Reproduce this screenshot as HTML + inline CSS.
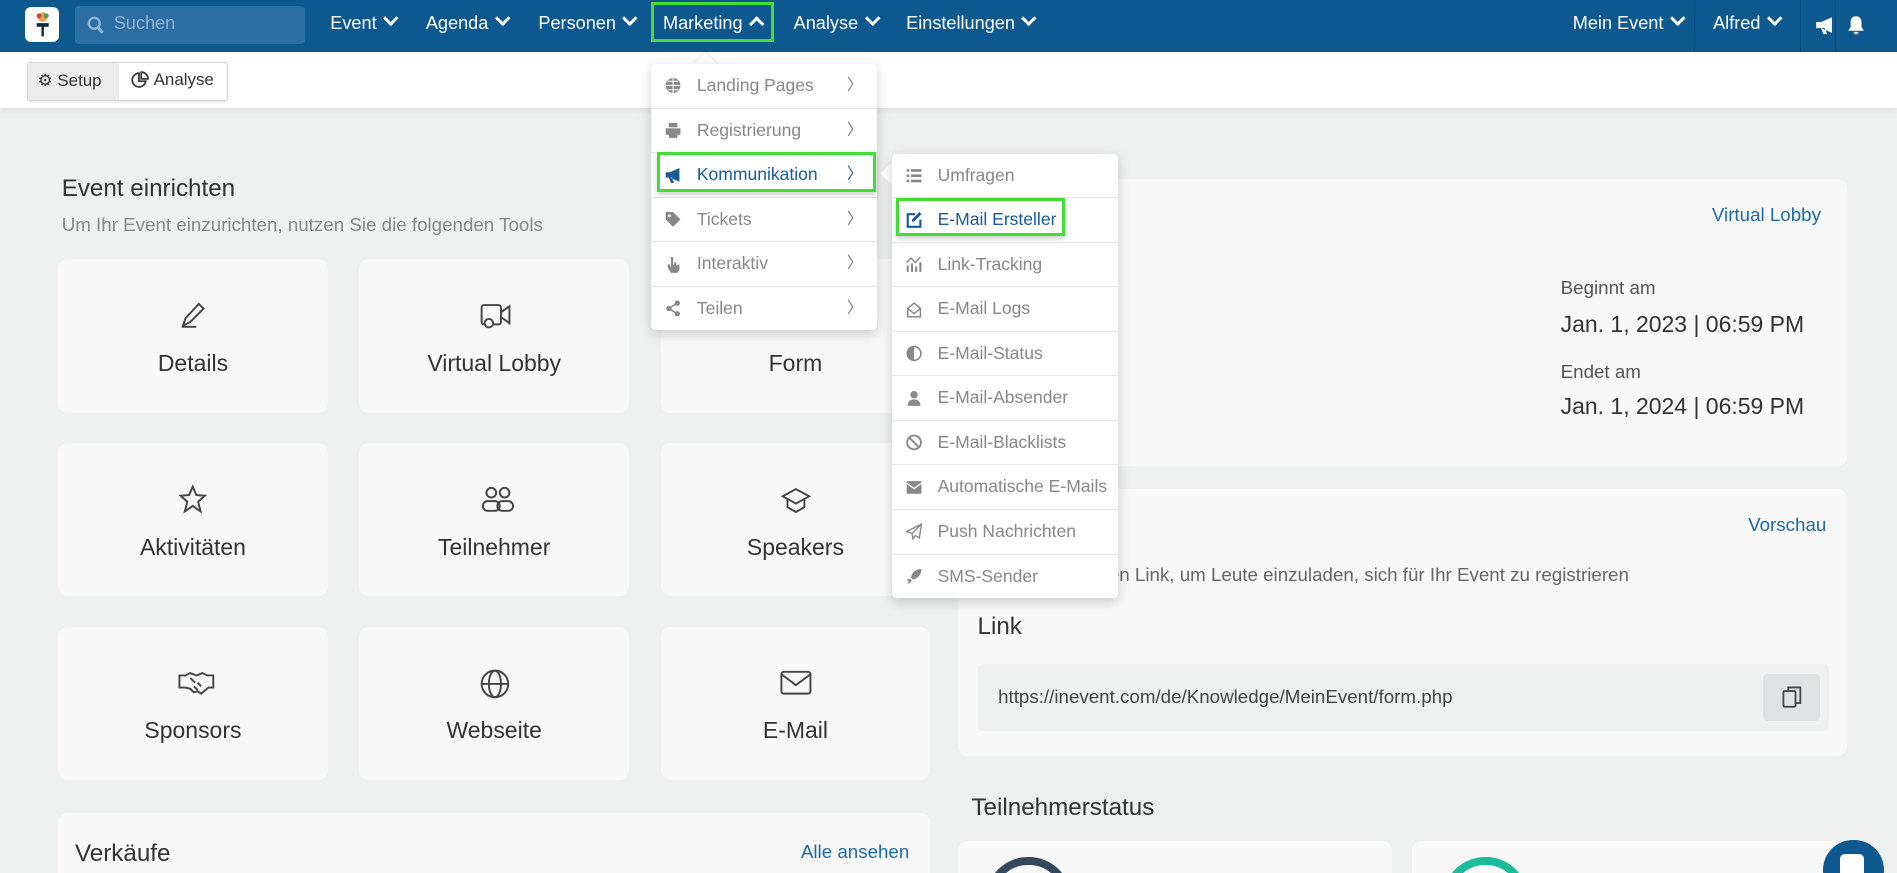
<!DOCTYPE html>
<html><head><meta charset="utf-8">
<style>
html,body{margin:0;padding:0;overflow:hidden;height:100%}
html{zoom:1.2098}
#w{width:1568px;height:722px;overflow:hidden;background:#eff0f0;font-family:"Liberation Sans",sans-serif;position:relative;color:#333}
.abs{position:absolute}
.nav{left:0;top:0;width:1568px;height:43px;background:#0e5890}
.nav .it{position:absolute;top:11px;color:#fff;font-size:15px;white-space:nowrap}
.chev{display:inline-block;width:7px;height:7px;border-right:2.5px solid #fff;border-bottom:2.5px solid #fff;transform:rotate(45deg);margin-left:7px;position:relative;top:-4px}
.chevu{transform:rotate(-135deg);top:0}
.div{position:absolute;top:0;width:1px;height:43px;background:#0a4a7a}
.sub{left:0;top:43px;width:1568px;height:46px;background:#fff;box-shadow:0 2px 4px rgba(0,0,0,.08)}
.card{position:absolute;background:#f8f8f8;border-radius:8px}
.tile{width:223px;height:127px;text-align:center}
.tile svg{position:absolute;left:98px;top:33px}
.tile .lb{position:absolute;left:0;right:0;top:75px;font-size:19px;color:#333}
.menu{position:absolute;background:#fff;border-radius:4px;box-shadow:0 3px 10px rgba(0,0,0,.18)}
.mi{position:relative;height:36px;border-bottom:1px solid #e6e6e6;font-size:14.5px;color:#888;line-height:36px}
.mi:last-child{border-bottom:none}
.mi .ic{position:absolute;left:11px;top:11px;width:15px;height:14px}
.mi .tx{position:absolute;left:38px}
.mi .ar{position:absolute;right:12px;top:0;font-size:13px;color:#777}
.green{position:absolute;border:3px solid #44dd33;box-shadow:0 2px 4px rgba(0,0,0,.2)}
a{color:#1e6aa6;text-decoration:none}
</style></head><body><div id="w">
<div class="abs nav">
  <div class="abs" style="left:21px;top:6px;width:28px;height:29px;background:#fff;border-radius:5px"></div>
  <svg class="abs" style="left:27px;top:9px" width="16" height="22" viewBox="0 0 16 22"><circle cx="8" cy="5" r="4" fill="#e8a050"/><circle cx="5" cy="4" r="2" fill="#d04040"/><circle cx="11" cy="4" r="2" fill="#40a060"/><path d="M3 10h10v3H9v8H7v-8H3z" fill="#0b2a40"/></svg>
  <div class="abs" style="left:62px;top:5px;width:190px;height:31px;background:#2b6ea3;border-radius:3px"></div>
  <svg class="abs" style="left:72px;top:13px" width="14" height="15" viewBox="0 0 14 15"><circle cx="6" cy="6" r="4.5" stroke="#8fb3d3" stroke-width="2" fill="none"/><path d="M9 9.5l4 4.5" stroke="#8fb3d3" stroke-width="2.5"/></svg>
  <div class="it" style="left:94px;color:#8fb3d3">Suchen</div>
  <div class="it" style="left:273px">Event<span class="chev"></span></div>
  <div class="it" style="left:352px">Agenda<span class="chev"></span></div>
  <div class="it" style="left:445px">Personen<span class="chev"></span></div>
  <div class="it" style="left:548px">Marketing<span class="chev chevu"></span></div>
  <div class="it" style="left:656px">Analyse<span class="chev"></span></div>
  <div class="it" style="left:749px">Einstellungen<span class="chev"></span></div>
  <div class="it" style="left:1300px">Mein Event<span class="chev"></span></div>
  <div class="div" style="left:1400px"></div>
  <div class="it" style="left:1416px">Alfred<span class="chev"></span></div>
  <div class="div" style="left:1488px"></div>
  <svg class="abs" style="left:1500px;top:13px" width="18" height="16" viewBox="0 0 18 16"><path d="M1 5h4l9-4v13l-9-4H1zM5 10l2 5h3l-2-5z" fill="#fff"/></svg>
  <div class="div" style="left:1517px"></div>
  <svg class="abs" style="left:1527px;top:12px" width="15" height="17" viewBox="0 0 15 17"><path d="M7.5 1c3 0 4.5 2 4.5 5v4l2 3H1l2-3V6c0-3 1.5-5 4.5-5zM5.5 14h4a2 2 0 0 1-4 0z" fill="#fff"/></svg>
</div>
<div class="green" style="left:538px;top:2px;width:97px;height:28px;box-shadow:none"></div>
<div class="abs sub"></div>
<div class="abs" style="left:22px;top:51px;width:165px;height:31px;border:1px solid #d5d5d5;border-radius:3px;background:#fff;box-shadow:0 1px 2px rgba(0,0,0,.1)"></div>
<div class="abs" style="left:23px;top:52px;width:75px;height:31px;background:#ececec"></div>
<div class="abs" style="left:31px;top:58px;font-size:14px;color:#333">⚙ Setup</div>
<svg class="abs" style="left:108px;top:59px" width="15" height="15" viewBox="0 0 16 16" fill="none" stroke="#333" stroke-width="1.5"><path d="M7 2a6 6 0 1 0 6 7H7z"/><path d="M9 1v6h6a6 6 0 0 0-6-6z"/></svg>
<div class="abs" style="left:127px;top:58px;font-size:14px;color:#333">Analyse</div>

<div class="abs" style="left:51px;top:145px;font-size:20px;color:#333">Event einrichten</div>
<div class="abs" style="left:51px;top:177px;font-size:15.5px;color:#888">Um Ihr Event einzurichten, nutzen Sie die folgenden Tools</div>

<div class="card tile" style="left:48px;top:214px"><svg width="26" height="26" viewBox="0 0 26 26" fill="none" stroke="#444" stroke-width="1.6"><path d="M5 22l2-6L18 4l4 4-11 11zM4 23h12"/></svg><div class="lb">Details</div></div>
<div class="card tile" style="left:297px;top:214px"><svg width="30" height="28" viewBox="0 0 30 28" fill="none" stroke="#444" stroke-width="1.6"><rect x="3" y="5" width="16" height="16" rx="2"/><path d="M19 11l7-5v14l-7-5"/><circle cx="9" cy="20" r="3.5" fill="#f8f8f8"/></svg><div class="lb">Virtual Lobby</div></div>
<div class="card tile" style="left:546px;top:214px"><div class="lb">Form</div></div>
<div class="card tile" style="left:48px;top:366px"><svg width="26" height="28" viewBox="0 0 26 28" fill="none" stroke="#444" stroke-width="1.6"><path d="M13 3l3 7 7 .5-5.5 5 2 8L13 19l-6.5 4.5 2-8L3 10.5l7-.5z"/></svg><div class="lb">Aktivitäten</div></div>
<div class="card tile" style="left:297px;top:366px"><svg width="34" height="28" viewBox="0 0 34 28" fill="none" stroke="#444" stroke-width="1.6"><circle cx="11" cy="8" r="4"/><circle cx="22" cy="8" r="4"/><rect x="4" y="15" width="14" height="8" rx="4"/><rect x="16" y="15" width="13" height="8" rx="4"/></svg><div class="lb">Teilnehmer</div></div>
<div class="card tile" style="left:546px;top:366px"><svg width="28" height="28" viewBox="0 0 28 28" fill="none" stroke="#444" stroke-width="1.6"><path d="M14 5l11 6-11 6-11-6zM7 13v7l7 4 7-4v-7"/></svg><div class="lb">Speakers</div></div>
<div class="card tile" style="left:48px;top:518px"><svg width="32" height="26" viewBox="0 0 32 26" fill="none" stroke="#444" stroke-width="1.6"><path d="M2 7h5l4-2 5 2 5-2 4 2h5v10h-4l-6 5-3-2-3 1-3-3-4-1H2zM11 9l4 4M14 16l3 3M17 13l3 3"/></svg><div class="lb">Sponsors</div></div>
<div class="card tile" style="left:297px;top:518px"><svg width="28" height="28" viewBox="0 0 28 28" fill="none" stroke="#444" stroke-width="1.6"><circle cx="14" cy="14" r="11"/><ellipse cx="14" cy="14" rx="5" ry="11"/><path d="M3 14h22"/></svg><div class="lb">Webseite</div></div>
<div class="card tile" style="left:546px;top:518px"><svg width="28" height="26" viewBox="0 0 28 26" fill="none" stroke="#444" stroke-width="1.6"><rect x="2" y="4" width="24" height="18" rx="2"/><path d="M2 6l12 9 12-9"/></svg><div class="lb">E-Mail</div></div>

<div class="card" style="left:48px;top:672px;width:721px;height:60px"></div>
<div class="abs" style="left:62px;top:694px;font-size:20px;color:#333">Verkäufe</div>
<div class="abs" style="left:662px;top:695px;font-size:15.5px"><a>Alle ansehen</a></div>

<div class="card" style="left:792px;top:148px;width:735px;height:237px"></div>
<div class="abs" style="left:1415px;top:169px;font-size:15.5px"><a>Virtual Lobby</a></div>
<div class="abs" style="left:1290px;top:229px;font-size:15.5px;color:#555">Beginnt am</div>
<div class="abs" style="left:1290px;top:257px;font-size:19px;color:#333">Jan. 1, 2023 | 06:59 PM</div>
<div class="abs" style="left:1290px;top:298px;font-size:15.5px;color:#555">Endet am</div>
<div class="abs" style="left:1290px;top:325px;font-size:19px;color:#333">Jan. 1, 2024 | 06:59 PM</div>
<div class="abs" style="left:808px;top:325px;font-size:19px;color:#333">Zeitzone</div>
<div class="abs" style="left:880px;top:325px;font-size:19px;color:#333">Zone</div>

<div class="card" style="left:792px;top:404px;width:735px;height:221px"></div>
<div class="abs" style="left:808px;top:426px;font-size:19px;color:#333">Registrierung</div>
<div class="abs" style="left:1445px;top:425px;font-size:15.5px"><a>Vorschau</a></div>
<div class="abs" style="left:808px;top:466px;font-size:15.5px;color:#666">Nutzen Sie diesen Link, um Leute einzuladen, sich für Ihr Event zu registrieren</div>
<div class="abs" style="left:808px;top:507px;font-size:20px;color:#333">Link</div>
<div class="abs" style="left:808px;top:549px;width:704px;height:55px;background:#eff0f0;border-radius:4px"></div>
<div class="abs" style="left:825px;top:567px;font-size:15.5px;color:#444">https://inevent.com/de/Knowledge/MeinEvent/form.php</div>
<div class="abs" style="left:1457px;top:557px;width:47px;height:39px;background:#e0e1e2;border-radius:4px"></div>
<svg class="abs" style="left:1472px;top:566px" width="18" height="20" viewBox="0 0 18 20" fill="none" stroke="#444" stroke-width="1.5"><rect x="2" y="5" width="10" height="13" rx="1"/><path d="M6 5V2h10v13h-4"/></svg>

<div class="abs" style="left:803px;top:656px;font-size:20px;color:#333">Teilnehmerstatus</div>
<div class="card" style="left:792px;top:695px;width:359px;height:40px"></div>
<div class="card" style="left:1167px;top:695px;width:360px;height:40px"></div>
<div class="abs" style="left:815px;top:708px;width:70px;height:70px;border:7px solid #34495e;border-radius:50%;box-sizing:border-box"></div>
<div class="abs" style="left:1193px;top:708px;width:70px;height:70px;border:7px solid #1abc9c;border-radius:50%;box-sizing:border-box"></div>
<div class="abs" style="left:1507px;top:694px;width:50px;height:50px;background:#0e5890;border-radius:50%"></div>
<div class="abs" style="left:1521px;top:706px;width:20px;height:20px;background:#fff;border-radius:4px"></div>

<div class="abs" style="left:576px;top:46px;width:14px;height:14px;background:#fff;transform:rotate(45deg);box-shadow:-1px -1px 2px rgba(0,0,0,.08)"></div>
<div class="menu" style="left:538px;top:53px;width:187px">
  <div class="mi"><svg class="ic" viewBox="0 0 16 16"><circle cx="8" cy="8" r="7" fill="#888"/><path d="M1 8h14M8 1v14M3 4h10M3 12h10" stroke="#fff" stroke-width="1"/></svg><span class="tx">Landing Pages</span><span class="ar">〉</span></div>
  <div class="mi"><svg class="ic" viewBox="0 0 16 16"><path d="M4 1h8v4H4zM1 6h14v6h-3v3H4v-3H1z" fill="#888"/></svg><span class="tx">Registrierung</span><span class="ar">〉</span></div>
  <div class="mi" style="color:#1a5a96"><svg class="ic" viewBox="0 0 16 16"><path d="M1 5h4l9-4v13l-9-4H1zM4 10l2 5h3l-2-5z" fill="#1a5a96"/></svg><span class="tx">Kommunikation</span><span class="ar" style="color:#1a5a96">〉</span></div>
  <div class="mi"><svg class="ic" viewBox="0 0 16 16"><path d="M1 1h7l7 7-7 7-7-7z" fill="#888"/><circle cx="4.5" cy="4.5" r="1.3" fill="#fff"/></svg><span class="tx">Tickets</span><span class="ar">〉</span></div>
  <div class="mi"><svg class="ic" viewBox="0 0 16 16"><path d="M6 1h2v7h1V6h2v3h1V8h2v5l-2 3H6L3 11V8h2v2h1z" fill="#888"/></svg><span class="tx">Interaktiv</span><span class="ar">〉</span></div>
  <div class="mi"><svg class="ic" viewBox="0 0 16 16"><circle cx="12" cy="3" r="2.5" fill="#888"/><circle cx="4" cy="8" r="2.5" fill="#888"/><circle cx="12" cy="13" r="2.5" fill="#888"/><path d="M12 3L4 8l8 5" stroke="#888" stroke-width="1.5" fill="none"/></svg><span class="tx">Teilen</span><span class="ar">〉</span></div>
</div>
<div class="green" style="left:543px;top:126px;width:176px;height:28px"></div>

<div class="abs" style="left:731px;top:137px;width:12px;height:12px;background:#fff;transform:rotate(45deg)"></div>
<div class="menu" style="left:737px;top:127px;width:187px">
  <div class="mi"><svg class="ic" viewBox="0 0 16 16" fill="#888"><rect x="1" y="2" width="2.5" height="2.5"/><rect x="5" y="2" width="10" height="2.5"/><rect x="1" y="7" width="2.5" height="2.5"/><rect x="5" y="7" width="10" height="2.5"/><rect x="1" y="12" width="2.5" height="2.5"/><rect x="5" y="12" width="10" height="2.5"/></svg><span class="tx">Umfragen</span></div>
  <div class="mi" style="color:#1a5a96"><svg class="ic" viewBox="0 0 16 16"><path d="M9 3H2v12h12V8" stroke="#1a5a96" stroke-width="2" fill="none"/><path d="M13 1l2 2-7 7H6V8z" fill="#1a5a96"/></svg><span class="tx">E-Mail Ersteller</span></div>
  <div class="mi"><svg class="ic" viewBox="0 0 16 16" fill="#888"><rect x="1" y="9" width="2" height="6"/><rect x="5" y="7" width="2" height="8"/><rect x="9" y="10" width="2" height="5"/><rect x="13" y="6" width="2" height="9"/><path d="M1 6l4-4 4 4 5-5" stroke="#888" stroke-width="1.3" fill="none"/></svg><span class="tx">Link-Tracking</span></div>
  <div class="mi"><svg class="ic" viewBox="0 0 16 16"><path d="M2 7l6-5 6 5v8H2zM2 7l6 5 6-5" stroke="#888" stroke-width="1.4" fill="none"/></svg><span class="tx">E-Mail Logs</span></div>
  <div class="mi"><svg class="ic" viewBox="0 0 16 16"><circle cx="8" cy="8" r="6.5" stroke="#888" stroke-width="1.5" fill="none"/><path d="M8 1.5a6.5 6.5 0 0 0 0 13z" fill="#888"/></svg><span class="tx">E-Mail-Status</span></div>
  <div class="mi"><svg class="ic" viewBox="0 0 16 16" fill="#888"><circle cx="8" cy="4.5" r="3.5"/><path d="M2 15c0-5 3-6 6-6s6 1 6 6z"/></svg><span class="tx">E-Mail-Absender</span></div>
  <div class="mi"><svg class="ic" viewBox="0 0 16 16" stroke="#888" stroke-width="1.8" fill="none"><circle cx="8" cy="8" r="6.5"/><path d="M3.5 3.5l9 9"/></svg><span class="tx">E-Mail-Blacklists</span></div>
  <div class="mi"><svg class="ic" viewBox="0 0 16 16"><rect x="1" y="2" width="14" height="12" rx="1" fill="#888"/><path d="M1 4l7 5 7-5" stroke="#fff" stroke-width="1.3" fill="none"/></svg><span class="tx">Automatische E-Mails</span></div>
  <div class="mi"><svg class="ic" viewBox="0 0 16 16"><path d="M15 1L1 8l5 2 1 5 2-3 4 2zM6 10l9-9" stroke="#888" stroke-width="1.3" fill="none"/></svg><span class="tx">Push Nachrichten</span></div>
  <div class="mi"><svg class="ic" viewBox="0 0 16 16"><path d="M15 1c-5 0-9 3-10 8l2 2c5-1 8-5 8-10zM4 10l-3 1 2 2-2 2 3-1 2-2z" fill="#888"/></svg><span class="tx">SMS-Sender</span></div>
</div>
<div class="green" style="left:741px;top:164px;width:134px;height:26px"></div>
</div></body></html>
